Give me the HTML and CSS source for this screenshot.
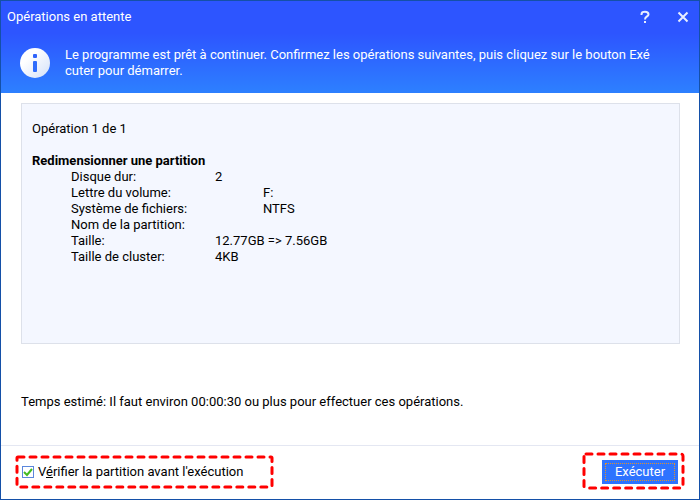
FILE: index.html
```
<!DOCTYPE html>
<html lang="fr">

<head>
    <meta charset="utf-8">
    <title>Opérations en attente</title>
    <meta name="viewport" content="width=device-width">
    <link rel="stylesheet" href="styles.css">
</head>

<body>
    <div class="dialog">
        <header class="header">
            <div class="titlebar">
                <h1 class="title">Opérations en attente</h1>
                <button type="button" class="title-btn" aria-label="Aide">
                    <svg width="12" height="14" viewBox="0 0 12 14" fill="none" stroke="#e8eeff" stroke-width="2">
                        <path d="M2.5 5V4.200C2.500 2.500 4 1.800 6 1.800S9.500 2.700 9.500 4.500C9.500 6.500 6 6.500 6 9.500" />
                        <path d="M6 11v2" />
                    </svg>
                </button>
                <button type="button" class="title-btn" aria-label="Fermer">
                    <svg width="12" height="12" viewBox="0 0 12 12" fill="none" stroke="#e8eeff" stroke-width="2">
                        <path d="M1.500 1.500l9 9M10.500 1.500l-9 9" />
                    </svg>
                </button>
            </div>
            <div class="message">
                <svg class="info" width="30" height="30" viewBox="0 0 30 30">
                    <defs>
                        <linearGradient id="disc" x1="0" y1="0" x2="1" y2="1">
                            <stop offset="0.300" stop-color="#fff" />
                            <stop offset="1" stop-color="#d3e0f8" />
                        </linearGradient>
                    </defs>
                    <circle cx="15" cy="15" r="15" fill="url(#disc)" />
                    <rect x="13" y="6" width="4" height="4" rx="1" fill="#2f63fb" />
                    <rect x="13" y="13" width="4" height="11" rx="1" fill="#2f6cfc" />
                </svg>
                <p class="message-text">Le programme est prêt à continuer. Confirmez les opérations suivantes, puis cliquez sur le bouton Exé<br>cuter pour démarrer.</p>
            </div>
        </header>

        <main class="content">
            <section class="operations">
                <p>Opération 1 de 1</p>
                <h2 class="op-title">Redimensionner une partition</h2>
                <table class="details">
                    <tr><th scope="row">Disque dur:</th><td>2</td></tr>
                    <tr><th scope="row">Lettre du volume:</th><td class="tab">F:</td></tr>
                    <tr><th scope="row">Système de fichiers:</th><td class="tab">NTFS</td></tr>
                    <tr><th scope="row">Nom de la partition:</th><td></td></tr>
                    <tr><th scope="row">Taille:</th><td>12.77GB =&gt; 7.56GB</td></tr>
                    <tr><th scope="row">Taille de cluster:</th><td>4KB</td></tr>
                </table>
            </section>
            <p class="estimate">Temps estimé: Il faut environ 00:00:30 ou plus pour effectuer ces opérations.</p>
        </main>

        <footer class="footer">
            <div class="option">
                <input type="checkbox" id="check" class="check" checked>
                <label for="check">V<u>é</u>rifier la partition avant l'exécution</label>
                <svg class="mark mark-option" aria-hidden="true"><rect class="mark-line" x="2" y="2" rx="1" /></svg>
            </div>
            <div class="action">
                <button type="button" class="run"><span class="run-label">Exécuter</span></button>
                <svg class="mark mark-action" aria-hidden="true"><rect class="mark-line" x="2" y="2" rx="2" /></svg>
            </div>
        </footer>
    </div>
</body>

</html>
```
FILE: styles.css
```
* {
    box-sizing: border-box;
}

body {
    margin: 0;
    font-family: Roboto, "Liberation Sans", sans-serif;
    font-size: 13px;
    line-height: 16px;
    color: #000;
}

p, h1, h2 {
    margin: 0;
    font-size: 13px;
}

.dialog {
    display: flex;
    flex-direction: column;
    min-height: 100vh;
    border: 1px solid #1450a8;
    background: #fff;
}

/* blue top part */
.header {
    padding-bottom: 14px;
    color: #fff;
    background: linear-gradient(#2d55ff 35%, #2d80ff);
}

.titlebar {
    display: flex;
    align-items: center;
    height: 32px;
    padding: 0 3px 0 6px;
}

.title {
    flex: 1;
    font-weight: 400;
}

.title-btn {
    display: flex;
    align-items: center;
    justify-content: center;
    width: 26px;
    height: 26px;
    margin-left: 12px;
    padding: 0;
    border: 0;
    background: none;
}

.message {
    display: flex;
    align-items: center;
    gap: 15px;
    padding: 14px 8px 0 19px;
}

.info {
    flex: none;
}

/* operation list */
.content {
    flex: 1;
    padding: 10px 19px 0 20px;
}

.operations {
    min-height: 241px;
    padding: 17px 10px;
    border: 1px solid #dde1ea;
    background: #f4f7ff;
}

.op-title {
    margin-top: 16px;
    font-weight: 700;
}

.details {
    margin-left: 39px;
    border-collapse: collapse;
}

.details th {
    width: 144px;
    padding: 0;
    font-weight: 400;
    text-align: left;
}

.details td {
    height: 16px;
    padding: 0;
}

.details .tab {
    padding-left: 48px;
}

.estimate {
    margin-top: 50px;
}

/* bottom bar */
.footer {
    display: flex;
    align-items: center;
    justify-content: space-between;
    height: 54px;
    padding: 0 21px 1px;
    border-top: 1px solid #e4e7f2;
}

.option,
.action {
    position: relative;
    display: flex;
    align-items: center;
}

.option {
    gap: 4px;
}

.check {
    appearance: none;
    width: 12px;
    height: 12px;
    margin: 0;
    border: 1px solid #5b87dc;
    background: #fff;
}

.check:checked {
    background: url("data:image/svg+xml,%3Csvg xmlns='http://www.w3.org/2000/svg' viewBox='0 0 10 10'%3E%3Cpath d='M1 5l3 3 5-6' fill='none' stroke='%2344bb22' stroke-width='2'/%3E%3C/svg%3E");
}

.run {
    width: 76px;
    height: 24px;
    padding: 3px;
    border: 0;
    color: #fff;
    background: #2d73ff;
    font: inherit;
}

.run-label {
    display: block;
    border: 1px dotted #e0912f;
    line-height: 16px;
}

/* red dashed frames round the two controls */
.mark {
    position: absolute;
    pointer-events: none;
}

.mark-option {
    top: -9px;
    left: -7px;
    width: 259px;
    height: 34px;
}

.mark-action {
    top: -8px;
    right: -7px;
    width: 103px;
    height: 38px;
}

.mark-line {
    width: calc(100% - 4px);
    height: calc(100% - 4px);
    fill: none;
    stroke: #f00;
    stroke-width: 3px;
    stroke-linecap: round;
    stroke-dasharray: 6 6;
}
```
